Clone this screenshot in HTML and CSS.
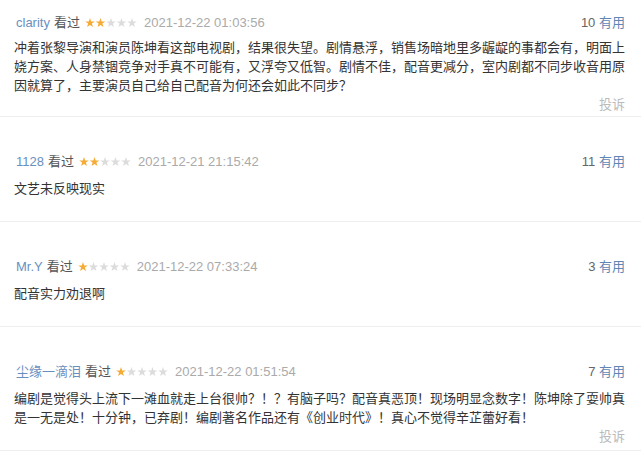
FILE: index.html
```html
<!DOCTYPE html>
<html>
<head>
  <title>短评</title>
  <link rel="stylesheet" href="styles.css">
</head>
<body>
  <!-- Ster-symbool, hergebruikt in elke beoordeling -->
  <svg class="defs" width="0" height="0">
    <symbol id="star" viewBox="0 0 10 10">
      <polygon points="5,0 6.18,3.38 9.76,3.45 6.9,5.62 7.94,9.05 5,7 2.06,9.05 3.1,5.62 0.24,3.45 3.82,3.38"/>
    </symbol>
  </svg>

  <div class="list">
    <div class="item first">
      <div class="head">
        <div class="info">
          <a class="name" href="#">clarity</a>
          <span class="seen">看过</span>
          <svg class="stars" viewBox="0 0 52 10" width="52" height="10">
            <use href="#star" class="on" x="0" width="10" height="10"/>
            <use href="#star" class="on" x="10.5" width="10" height="10"/>
            <use href="#star" x="21" width="10" height="10"/>
            <use href="#star" x="31.5" width="10" height="10"/>
            <use href="#star" x="42" width="10" height="10"/>
          </svg>
          <span class="time">2021-12-22 01:03:56</span>
        </div>
        <div class="votes"><span class="count">10</span> <a href="#">有用</a></div>
      </div>
      <p class="text">冲着张黎导演和演员陈坤看这部电视剧，结果很失望。剧情悬浮，销售场暗地里多龌龊的事都会有，明面上娆方案、人身禁锢竞争对手真不可能有，又浮夸又低智。剧情不佳，配音更减分，室内剧都不同步收音用原因就算了，主要演员自己给自己配音为何还会如此不同步？</p>
      <div class="foot"><a class="report" href="#">投诉</a></div>
    </div>

    <div class="item">
      <div class="head">
        <div class="info">
          <a class="name" href="#">1128</a>
          <span class="seen">看过</span>
          <svg class="stars" viewBox="0 0 52 10" width="52" height="10">
            <use href="#star" class="on" x="0" width="10" height="10"/>
            <use href="#star" class="on" x="10.5" width="10" height="10"/>
            <use href="#star" x="21" width="10" height="10"/>
            <use href="#star" x="31.5" width="10" height="10"/>
            <use href="#star" x="42" width="10" height="10"/>
          </svg>
          <span class="time">2021-12-21 21:15:42</span>
        </div>
        <div class="votes"><span class="count">11</span> <a href="#">有用</a></div>
      </div>
      <p class="text">文艺未反映现实</p>
      <div class="foot"></div>
    </div>

    <div class="item">
      <div class="head">
        <div class="info">
          <a class="name" href="#">Mr.Y</a>
          <span class="seen">看过</span>
          <svg class="stars" viewBox="0 0 52 10" width="52" height="10">
            <use href="#star" class="on" x="0" width="10" height="10"/>
            <use href="#star" x="10.5" width="10" height="10"/>
            <use href="#star" x="21" width="10" height="10"/>
            <use href="#star" x="31.5" width="10" height="10"/>
            <use href="#star" x="42" width="10" height="10"/>
          </svg>
          <span class="time">2021-12-22 07:33:24</span>
        </div>
        <div class="votes"><span class="count">3</span> <a href="#">有用</a></div>
      </div>
      <p class="text">配音实力劝退啊</p>
      <div class="foot"></div>
    </div>

    <div class="item">
      <div class="head">
        <div class="info">
          <a class="name" href="#">尘缘一滴泪</a>
          <span class="seen">看过</span>
          <svg class="stars" viewBox="0 0 52 10" width="52" height="10">
            <use href="#star" class="on" x="0" width="10" height="10"/>
            <use href="#star" x="10.5" width="10" height="10"/>
            <use href="#star" x="21" width="10" height="10"/>
            <use href="#star" x="31.5" width="10" height="10"/>
            <use href="#star" x="42" width="10" height="10"/>
          </svg>
          <span class="time">2021-12-22 01:51:54</span>
        </div>
        <div class="votes"><span class="count">7</span> <a href="#">有用</a></div>
      </div>
      <p class="text">编剧是觉得头上流下一滩血就走上台很帅？！？有脑子吗？配音真恶顶！现场明显念数字！陈坤除了耍帅真是一无是处！十分钟，已弃剧！编剧著名作品还有《创业时代》！真心不觉得辛芷蕾好看！</p>
      <div class="foot"><a class="report" href="#">投诉</a></div>
    </div>
  </div>
</body>
</html>
```

FILE: styles.css
```css
/* Basis: witte pagina, Arial-achtige letter met CJK-terugval */
body {
  margin: 0;
  background: #fff;
  font-family: "Liberation Sans", "Noto Sans CJK SC", sans-serif;
  font-size: 13px;
  line-height: 19px;
  color: #333;
}

.defs {
  position: absolute;
}

a {
  text-decoration: none;
}

/* Lijst met korte recensies */
.list {
  width: 641px;
}

.item {
  padding: 35px 14px 4px 14px;
  border-bottom: 1px solid #eeeeee;
}

.item.first {
  padding-top: 13px;
  padding-bottom: 2px;
}

/* Kopregel: naam, status, sterren, tijd en stemmen */
.head {
  display: flex;
  justify-content: space-between;
  align-items: center;
  height: 19px;
  padding-right: 2px;
}

.info {
  display: flex;
  align-items: center;
}

.name {
  color: #6a8fbf;
  margin-left: 2px;
  margin-right: 4px;
}

.seen {
  color: #555;
  margin-right: 5px;
}

.stars {
  display: block;
  margin-right: 7px;
  fill: #dcdcdc;
}

.stars .on {
  fill: #f5ab35;
}

.time {
  color: #aaa;
}

.votes {
  color: #666;
}

.votes a {
  color: #5f86b5;
}

/* Tekst van de recensie */
.text {
  margin: 8px 0 0;
  color: #333;
}

.first .text {
  margin-top: 6px;
}

/* Voetregel met de klachtlink */
.foot {
  height: 19px;
  text-align: right;
  padding-right: 2px;
}

.report {
  color: #bbb;
}
```
